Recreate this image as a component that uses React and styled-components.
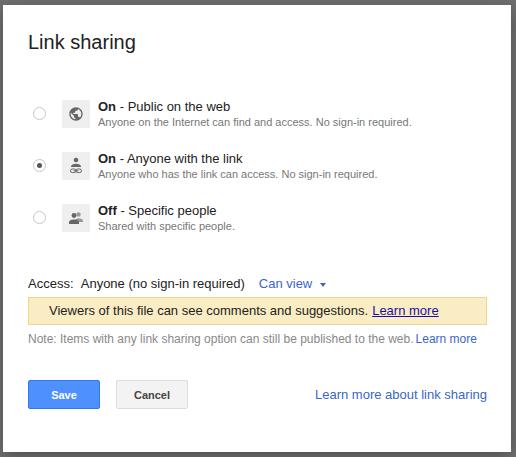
import React from 'react'
import styled, { createGlobalStyle } from 'styled-components'

const Global = createGlobalStyle`
  html, body { margin: 0; padding: 0; background: #6e6e6e; }
  body { font-family: Arial, "Liberation Sans", sans-serif; }
`

const Backdrop = styled.div`
  width: 516px;
  height: 457px;
  padding: 5px 5px 5px 3px;
  box-sizing: border-box;
  background: #707070;
`

const Dialog = styled.div`
  background: #fff;
  height: 447px;
  box-sizing: border-box;
  padding: 26px 24px 0 25px;
  box-shadow: 0 4px 16px rgba(0, 0, 0, 0.3);
`

const Title = styled.h1`
  margin: 0 0 44px;
  font-size: 20px;
  font-weight: normal;
  color: #222;
`

const Options = styled.div`
  display: flex;
  flex-direction: column;
  gap: 21px;
  margin-bottom: 43px;
`

const Option = styled.div`
  display: flex;
  align-items: center;
`

const Radio = styled.span`
  width: 13px;
  height: 13px;
  border-radius: 50%;
  border: 1px solid #c6c6c6;
  box-sizing: border-box;
  margin: 0 16px 0 5px;
  display: flex;
  align-items: center;
  justify-content: center;
  &::after {
    content: '';
    display: ${({ $checked }) => ($checked ? 'block' : 'none')};
    width: 5px;
    height: 5px;
    border-radius: 50%;
    background: #555;
  }
`

const IconBox = styled.div`
  width: 28px;
  height: 28px;
  background: #efefef;
  display: flex;
  align-items: center;
  justify-content: center;
  margin-right: 8px;
`

const Label = styled.div`
  font-size: 13px;
  color: #222;
  line-height: 17px;
  b { font-weight: bold; }
`

const Sub = styled.div`
  font-size: 11px;
  color: #777;
  line-height: 14px;
`

const Access = styled.div`
  font-size: 13px;
  color: #222;
  margin-bottom: 6px;
  display: flex;
  align-items: center;
`

const Dropdown = styled.span`
  color: #3b66c7;
  margin-left: 14px;
  &::after {
    content: '';
    display: inline-block;
    margin-left: 8px;
    vertical-align: middle;
    border-left: 3px solid transparent;
    border-right: 3px solid transparent;
    border-top: 4px solid #3b66c7;
  }
`

const Notice = styled.div`
  background: #faedc3;
  border: 1px solid #efd68f;
  padding: 5px 20px 6px;
  font-size: 13px;
  color: #222;
  a { color: #1a0dab; text-decoration: underline; margin-left: 4px; }
`

const Note = styled.div`
  margin-top: 7px;
  font-size: 12px;
  color: #888;
  a { color: #3b66c7; text-decoration: none; margin-left: 2px; }
`

const Footer = styled.div`
  display: flex;
  align-items: center;
  margin-top: 34px;
`

const Button = styled.button`
  width: ${({ $w }) => $w}px;
  height: 29px;
  border-radius: 2px;
  font-family: inherit;
  font-size: 11px;
  font-weight: bold;
  margin-right: 16px;
  border: 1px solid ${({ $primary }) => ($primary ? '#3079ed' : '#dcdcdc')};
  background: ${({ $primary }) => ($primary ? '#4d90fe' : '#f3f3f3')};
  color: ${({ $primary }) => ($primary ? '#fff' : '#444')};
`

const FooterLink = styled.a`
  margin-left: auto;
  font-size: 13px;
  color: #3b66c7;
  text-decoration: none;
`

const Globe = () => (
  <svg width="16" height="16" viewBox="0 0 24 24" fill="#666">
    <path d="M12 2C6.48 2 2 6.48 2 12s4.48 10 10 10 10-4.48 10-10S17.520 2 12 2zm-1 17.93c-3.95-.49-7-3.85-7-7.93 0-.62.08-1.21.21-1.79L9 15v1c0 1.1.9 2 2 2v1.930zm6.9-2.54c-.26-.81-1-1.39-1.9-1.39h-1v-3c0-.55-.45-1-1-1H8v-2h2c.55 0 1-.45 1-1V7h2c1.1 0 2-.9 2-2v-.41c2.93 1.19 5 4.06 5 7.41 0 2.08-.8 3.97-2.1 5.39z" />
  </svg>
)

const PersonLink = () => (
  <svg width="16" height="18" viewBox="0 0 16 18" fill="none">
    <circle cx="8" cy="3" r="2.3" fill="#666" />
    <path d="M3 9.5c0-2 2.5-2.8 5-2.8s5 .8 5 2.8V10H3z" fill="#666" />
    <rect x="2.5" y="12" width="5.5" height="3.6" rx="1.8" stroke="#666" strokeWidth="1" />
    <rect x="8" y="12" width="5.5" height="3.6" rx="1.8" stroke="#666" strokeWidth="1" />
    <path d="M5.5 13.8h5" stroke="#666" strokeWidth="1" />
  </svg>
)

const People = () => (
  <svg width="16" height="14" viewBox="0 0 16 14" fill="#666">
    <circle cx="10.5" cy="3.5" r="2.2" fill="#999" />
    <path d="M7 10c0-2 2-2.8 3.5-2.8S15 8 15 10v1H7z" fill="#999" />
    <circle cx="6" cy="4.5" r="2.4" />
    <path d="M1 11.5c0-2.2 2.6-3 5-3s5 .8 5 3V13H1z" />
  </svg>
)

const options = [
  { state: 'On', title: 'Public on the web', sub: 'Anyone on the Internet can find and access. No sign-in required.', icon: <Globe /> },
  { state: 'On', title: 'Anyone with the link', sub: 'Anyone who has the link can access. No sign-in required.', icon: <PersonLink />, checked: true },
  { state: 'Off', title: 'Specific people', sub: 'Shared with specific people.', icon: <People /> },
]

export default function App() {
  return (
    <Backdrop>
      <Global />
      <Dialog>
        <Title>Link sharing</Title>
        <Options>
          {options.map((o) => (
            <Option key={o.title}>
              <Radio $checked={o.checked} />
              <IconBox>{o.icon}</IconBox>
              <div>
                <Label>
                  <b>{o.state}</b> - {o.title}
                </Label>
                <Sub>{o.sub}</Sub>
              </div>
            </Option>
          ))}
        </Options>
        <Access>
          Access:&nbsp;&nbsp;Anyone (no sign-in required)
          <Dropdown>Can view</Dropdown>
        </Access>
        <Notice>
          Viewers of this file can see comments and suggestions.<a href="#">Learn more</a>
        </Notice>
        <Note>
          Note: Items with any link sharing option can still be published to the web.<a href="#">Learn more</a>
        </Note>
        <Footer>
          <Button $primary $w={72}>Save</Button>
          <Button $w={72}>Cancel</Button>
          <FooterLink href="#">Learn more about link sharing</FooterLink>
        </Footer>
      </Dialog>
    </Backdrop>
  )
}
